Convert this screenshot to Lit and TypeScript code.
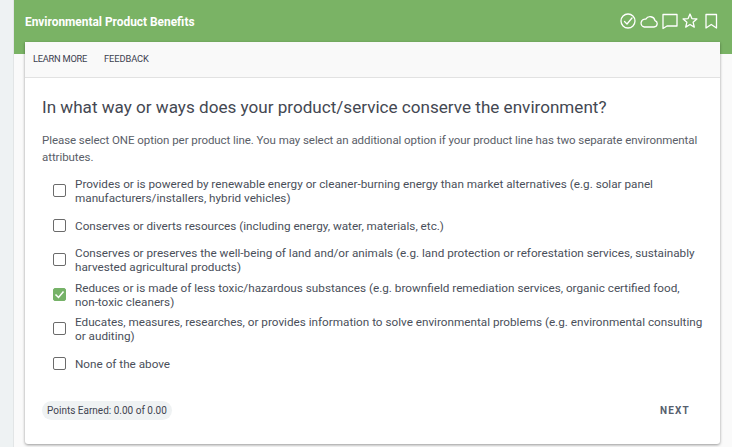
import { LitElement, html, css, svg } from "lit";
import { customElement } from "lit/decorators.js";

const options: { text: string[]; cls: string; checked?: boolean }[] = [
  { text: ["Provides or is powered by renewable energy or cleaner-burning energy than market alternatives (e.g. solar panel", "manufacturers/installers, hybrid vehicles)"], cls: "o1" },
  { text: ["Conserves or diverts resources (including energy, water, materials, etc.)"], cls: "o2" },
  { text: ["Conserves or preserves the well-being of land and/or animals (e.g. land protection or reforestation services, sustainably", "harvested agricultural products)"], cls: "o3" },
  { text: ["Reduces or is made of less toxic/hazardous substances (e.g. brownfield remediation services, organic certified food,", "non-toxic cleaners)"], cls: "o4", checked: true },
  { text: ["Educates, measures, researches, or provides information to solve environmental problems (e.g. environmental consulting", "or auditing)"], cls: "o5" },
  { text: ["None of the above"], cls: "o6" },
];

const icon = (w: number, body: unknown) => html`<svg width=${w} height="18" viewBox="0 0 ${w} 18" fill="none" stroke="#fff" stroke-width="1.3" stroke-linejoin="round" stroke-linecap="round">${body}</svg>`;

@customElement("app-root")
export class AppRoot extends LitElement {
  static styles = css`
    :host { display: block; width: 732px; height: 447px; overflow: hidden; font-family: Roboto, "Liberation Sans", sans-serif; color: #4a4f5a; background: #fafafa; }
    .page { display: flex; height: 447px; }
    .gutter { width: 13px; flex: none; background: #eef2f3; border-right: 1px solid #e2e5e6; }
    .main { flex: 1; min-width: 0; display: flex; flex-direction: column; }
    .bar { height: 54px; flex: none; background: #7ab365; display: flex; align-items: flex-start; justify-content: space-between; padding: 12px 14px 0 11px; box-sizing: border-box; }
    .bar h1 { margin: 0; font-size: 11.9px; line-height: 20px; font-weight: 700; color: #fff; }
    .icons { display: flex; gap: 4px; align-items: center; height: 18px; }
    .icons svg { display: block; }
    .card { margin: -12px 12px 0 11px; height: 402px; flex: none; background: #fff; border-radius: 0 0 3px 3px; box-shadow: 0 1px 3px rgba(0,0,0,.4); display: flex; flex-direction: column; }
    .tabs { height: 36px; flex: none; box-sizing: border-box; background: #f9f9f9; border-bottom: 1px solid #e2e2e2; display: flex; align-items: center; gap: 17px; padding: 0 8px 2px; font-size: 9.3px; letter-spacing: -0.1px; color: #3c4250; }
    .tight { letter-spacing: -0.25px; }
    .body { flex: 1; padding: 19px 17px 0; min-height: 0; display: flex; flex-direction: column; }
    h2 { margin: 0; font-size: 17.1px; line-height: 20px; font-weight: 400; color: #444852; white-space: nowrap; }
    .lead { margin: 15px 0 0; font-size: 11.5px; letter-spacing: -0.06px; line-height: 17px; color: #5a5e68; white-space: nowrap; }
    .list { margin-top: 11px; display: flex; flex-direction: column; padding-left: 11px; }
    .opt { display: flex; align-items: center; gap: 9px; font-size: 11.72px; line-height: 14px; color: #4a4f5a; white-space: nowrap; }
    .o1 { height: 28px; }
    .o2 { height: 14px; margin-top: 14px; }
    .o3 { height: 28px; margin-top: 13px; }
    .o4 { height: 28px; margin-top: 7px; }
    .o5 { height: 28px; margin-top: 6px; }
    .o6 { height: 14px; margin-top: 14px; }
    .box { width: 11px; height: 11px; flex: none; border: 1px solid #6b6b6b; border-radius: 2px; background: #fff; display: flex; align-items: center; justify-content: center; margin-top: -1px; }
    .box.on { background: #76b268; border-color: #76b268; }
    .foot { margin-top: 30px; display: flex; align-items: center; justify-content: space-between; }
    .pts { background: #eff2f3; border-radius: 10px; font-size: 10px; line-height: 19px; padding: 0 5px; color: #3f4450; }
    .next { font-size: 10px; font-weight: 700; letter-spacing: 1.2px; color: #56606e; margin-right: 13px; }
  `;

  render() {
    return html`<div class="page">
      <div class="gutter"></div>
      <div class="main">
        <div class="bar">
          <h1>Environmental Product Benefits</h1>
          <div class="icons">
            ${icon(16, svg`<circle cx="8" cy="9" r="7"/><path d="M4.500 9.500 7 12l5-6"/>`)}
            ${icon(18, svg`<path d="M4.300 15h9.700a3.300 3.300 0 0 0 1-6.400A5 5 0 0 0 5.800 7.200 3.900 3.900 0 0 0 4.300 15z"/>`)}
            ${icon(16, svg`<path d="M1 2.500h14v11.500H5L1 16.500z"/>`)}
            ${icon(16, svg`<path d="M8 2l1.900 4.600 5 .4-3.800 3.200 1.200 4.900L8 12.500l-4.300 2.600 1.200-4.900L1.100 7l5-.4z"/>`)}
            ${icon(16, svg`<path d="M4 2.500h10.500v13.500L9.250 12.500 4 16z"/>`)}
          </div>
        </div>
        <div class="card">
          <div class="tabs"><span class="tight">LEARN MORE</span><span>FEEDBACK</span></div>
          <div class="body">
            <h2>In what way or ways does your product/service conserve the environment?</h2>
            <p class="lead">Please select ONE option per product line. You may select an additional option if your product line has two separate environmental<br />attributes.</p>
            <div class="list">
              ${options.map(o => html`<div class="opt ${o.cls}">
                <span class="box ${o.checked ? "on" : ""}">${o.checked ? html`<svg width="11" height="11" viewBox="0 0 11 11" fill="none" stroke="#fff" stroke-width="1.500"><path d="M1.500 5.500 4.500 8.500 9.500 2.500"/></svg>` : ""}</span>
                <span>${o.text.map((t, i) => html`${i ? html`<br />` : ""}${t}`)}</span>
              </div>`)}
            </div>
            <div class="foot"><span class="pts">Points Earned: 0.00 of 0.00</span><span class="next">NEXT</span></div>
          </div>
        </div>
      </div>
    </div>`;
  }
}
